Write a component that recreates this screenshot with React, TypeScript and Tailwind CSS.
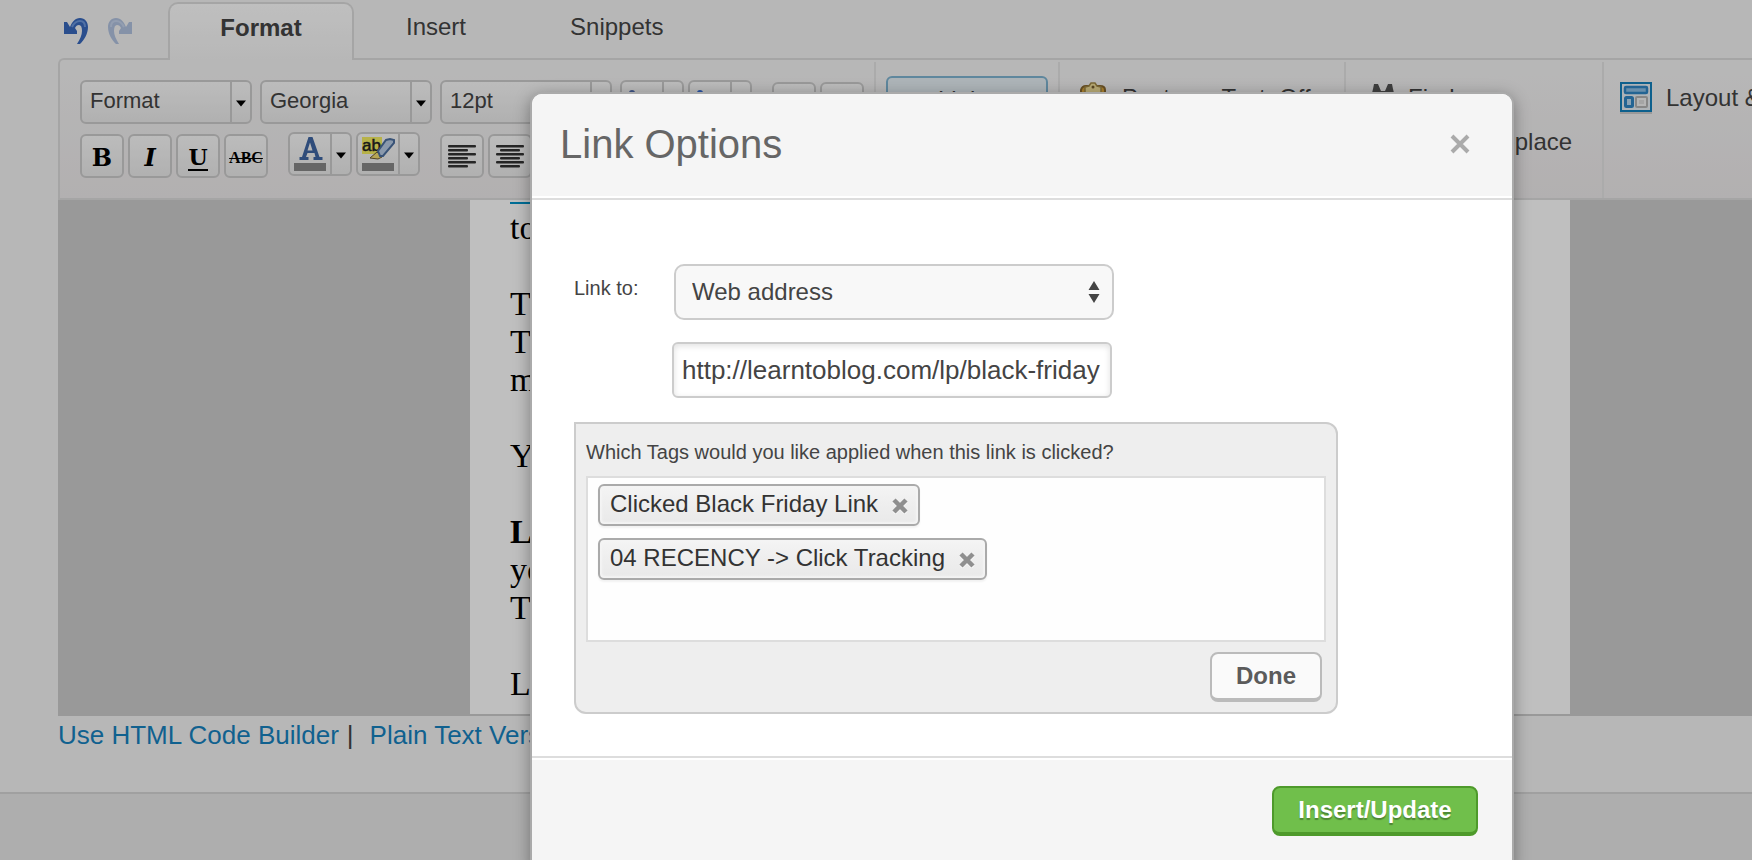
import React from "react";

const FONT = "font-['Liberation_Sans',Arial,sans-serif]";

const bodyLines = [
  { text: "to" },
  { text: "" },
  { text: "T" },
  { text: "T" },
  { text: "m" },
  { text: "" },
  { text: "Y" },
  { text: "" },
  { text: "L", bold: true },
  { text: "yo" },
  { text: "T" },
  { text: "" },
  { text: "L" },
];

const tags = ["Clicked Black Friday Link", "04 RECENCY -> Click Tracking"];

const boxStyle =
  "rounded-md border-2 border-[#ccc] bg-linear-to-b from-[#fbfbfb] to-[#ececec]";

function Caret() {
  return (
    <svg width="10" height="7" viewBox="0 0 10 7" aria-hidden="true">
      <path d="M0 0.5h10L5 6.5z" fill="#000" />
    </svg>
  );
}

function UndoIcon() {
  return (
    <svg width="26" height="28" viewBox="0 0 26 28" aria-hidden="true">
      <path
        d="M0 4h3l3 5C8 4 11 0 16 0c5 0 8 4 8 9 0 7-4 13-8 17h-3c3-5 5-9 5-13 0-4-1-6-3-6-2 0-3 1-4 3l2 3v3H0z"
        fill="#3868bd"
      />
      <path
        d="M8 9c2-4 4-6 8-6 3 0 5 2 5 6"
        fill="none"
        stroke="#6c97dc"
        strokeWidth="2"
      />
    </svg>
  );
}

function Combo({ label, value }: { label: string; value: string }) {
  return (
    <button
      aria-label={label}
      className={`flex h-11 w-43 shrink-0 items-stretch text-left text-[22px] text-[#444] ${boxStyle}`}
    >
      <span className="flex-1 pl-2 leading-[38px]">{value}</span>
      <span className="flex w-5 items-center justify-center border-l-2 border-[#ccc] pt-0.5">
        <Caret />
      </span>
    </button>
  );
}

function IconButton({
  label,
  children,
}: {
  label: string;
  children?: React.ReactNode;
}) {
  return (
    <button
      aria-label={label}
      className={`flex h-11 w-11 shrink-0 items-center justify-center ${boxStyle}`}
    >
      {children}
    </button>
  );
}

function SplitButton({
  label,
  children,
}: {
  label: string;
  children?: React.ReactNode;
}) {
  return (
    <button
      aria-label={label}
      className={`flex h-11 w-16 shrink-0 items-stretch ${boxStyle}`}
    >
      <span className="flex flex-1 items-center justify-center">
        {children}
      </span>
      <span className="flex w-5 items-center justify-center border-l-2 border-[#ccc] pt-0.5">
        <Caret />
      </span>
    </button>
  );
}

function AlignIcon({ centered }: { centered?: boolean }) {
  return (
    <svg width="28" height="24" viewBox="0 0 28 24" aria-hidden="true">
      {[1, 5, 9, 13, 17, 21].map((y, i) => {
        const w = i % 2 === 0 ? 28 : 20;
        return (
          <rect
            key={y}
            x={centered ? (28 - w) / 2 : 0}
            y={y}
            width={w}
            height="2.4"
            rx="1"
            fill="#333"
          />
        );
      })}
    </svg>
  );
}

function ListIcon({ color }: { color: string }) {
  return (
    <svg width="28" height="24" viewBox="0 0 28 24" aria-hidden="true">
      {[2, 11, 20].map((y) => (
        <g key={y}>
          <circle cx="4" cy={y + 1} r="3" fill={color} />
          <rect x="10" y={y} width="17" height="2" fill="#777" />
        </g>
      ))}
    </svg>
  );
}

function TextColorIcon() {
  return (
    <svg width="32" height="36" viewBox="0 0 32 36" aria-hidden="true">
      <path
        d="M14.500 1h4l7 20h3v3h-9v-3h2l-1-4h-7l-1.500 4h2.500v3h-9v-3h2.500zM16 6.500l-2.500 8h5z"
        fill="#3f66a3"
        fillRule="evenodd"
      />
      <rect y="27" width="32" height="8" fill="#888" />
    </svg>
  );
}

function HighlightIcon() {
  return (
    <svg width="34" height="36" viewBox="0 0 34 36" aria-hidden="true">
      <rect x="1" y="1" width="20" height="17" fill="#f4ee62" />
      <text
        x="1"
        y="15"
        fontSize="17"
        fontFamily="Liberation Sans, sans-serif"
        stroke="#222"
        strokeWidth="0.5"
        fill="#222"
      >
        ab
      </text>
      <path d="M9 22l7-6 5 5-4 2z" fill="#f2dd72" stroke="#6b5a30" />
      <path
        d="M17 15L25 4l4-1 4 1v3L22 20h-3z"
        fill="#b8cde6"
        stroke="#4c6f9f"
        strokeWidth="2"
      />
      <rect x="1" y="27" width="32" height="8" fill="#888" />
    </svg>
  );
}

function PasteIcon() {
  return (
    <svg width="32" height="32" viewBox="0 0 32 32" aria-hidden="true">
      <path d="M1 8q1-4 5-4h14q5 0 5 4v22H1z" fill="#e0a93a" stroke="#8a6a30" strokeWidth="2" />
      <path d="M5 12V5l4-1 2-3h4l2 3 4 1v7z" fill="#f4e29b" stroke="#a38a48" strokeWidth="1.500" />
      <circle cx="13" cy="5" r="1.500" fill="#7a6030" />
      <rect x="14" y="11" width="17" height="20" fill="#fff" stroke="#777" />
    </svg>
  );
}

function BinocularsIcon() {
  return (
    <svg width="26" height="30" viewBox="0 0 26 30" aria-hidden="true">
      <path
        d="M4 1h4l3 7h4l3-7h4l1 5 2 8v14H15v-9h-4v9H1V14l2-8z"
        fill="#555"
      />
    </svg>
  );
}

function LayoutIcon() {
  return (
    <svg width="32" height="32" viewBox="0 0 32 32" aria-hidden="true">
      <rect x="1" y="1" width="30" height="28" fill="#e9eff4" stroke="#1380bd" strokeWidth="2" />
      <rect x="5" y="5" width="22" height="6" rx="1" fill="#8dbfe6" stroke="#2f86c4" strokeWidth="2.500" />
      <rect x="5.500" y="15.500" width="7" height="9" rx="1" fill="#b8d9f0" stroke="#2f86c4" strokeWidth="3" />
      <rect x="16" y="15" width="11" height="10" rx="1" fill="#f2f2f2" stroke="#b5b5b5" strokeWidth="2" />
      <rect x="19" y="18" width="5" height="4" fill="#dcdcdc" />
      <path d="M0 31h32" stroke="#aaa" strokeWidth="1" />
    </svg>
  );
}

function Toolbar() {
  return (
    <div className="-mt-0.5 flex h-[142px] overflow-hidden rounded-tl-md border-2 border-r-0 border-[#ddd] bg-linear-to-b from-[#f5f5f5] to-[#eeebec] text-2xl text-[#444]">
      <div className="flex shrink-0 gap-2 pt-5 pl-5">
        <div className="flex flex-col gap-2">
          <div className="flex gap-2">
            <Combo label="Block format" value="Format" />
            <Combo label="Font family" value="Georgia" />
            <Combo label="Font size" value="12pt" />
            <div className="flex gap-1">
              <SplitButton label="Bullet list">
                <ListIcon color="#5570b0" />
              </SplitButton>
              <SplitButton label="Numbered list">
                <ListIcon color="#3b71d8" />
              </SplitButton>
            </div>
          </div>
          <div className="flex">
            <div className="flex gap-1 pt-0.5 text-black">
              <IconButton label="Bold">
                <span className="pt-1 font-['DejaVu_Serif',serif] text-2xl leading-6 font-bold">
                  B
                </span>
              </IconButton>
              <IconButton label="Italic">
                <span className="pt-1 font-['DejaVu_Serif',serif] text-2xl leading-6 font-bold italic">
                  I
                </span>
              </IconButton>
              <IconButton label="Underline">
                <span className="mt-1 border-b-2 border-black font-['DejaVu_Serif',serif] text-[22px] leading-6 font-bold">
                  U
                </span>
              </IconButton>
              <IconButton label="Strikethrough">
                <span className="pt-1 font-['Liberation_Serif',serif] text-base leading-6 font-bold line-through">
                  ABC
                </span>
              </IconButton>
            </div>
            <div className="flex gap-1 pl-5">
              <SplitButton label="Text color">
                <TextColorIcon />
              </SplitButton>
              <SplitButton label="Highlight color">
                <HighlightIcon />
              </SplitButton>
            </div>
            <div className="flex gap-1 pt-0.5 pl-5">
              <IconButton label="Align left">
                <AlignIcon />
              </IconButton>
              <IconButton label="Align center">
                <AlignIcon centered />
              </IconButton>
            </div>
          </div>
        </div>
        <div className="flex gap-1 pt-0.5 pl-3">
          <IconButton label="Outdent">
            <svg width="24" height="26" viewBox="0 0 24 26" aria-hidden="true">
              <path d="M11 1v24" stroke="#aaa" strokeWidth="3" />
            </svg>
          </IconButton>
          <IconButton label="Indent">
            <svg width="24" height="26" viewBox="0 0 24 26" aria-hidden="true">
              <path d="M11 1v24" stroke="#333" strokeWidth="3" />
            </svg>
          </IconButton>
        </div>
      </div>

      <div className="mt-0.5 ml-2.5 w-[186px] shrink-0 border-x-2 border-[#e4e4e4] pt-3.5 pl-2.5">
        <button className="flex h-11 w-[162px] items-center gap-3 rounded-md border-2 border-[#7fb4d2] bg-[#e7f1f6] pt-1 pl-2.5">
          <svg width="28" height="10" viewBox="0 0 28 10" aria-hidden="true">
            <rect x="1" y="1" width="12" height="8" rx="3" fill="none" stroke="#c5ccd4" strokeWidth="2" />
            <rect x="15" y="1" width="12" height="8" rx="3" fill="none" stroke="#c5ccd4" strokeWidth="2" />
          </svg>
          <span>Link</span>
        </button>
      </div>

      <div className="mt-0.5 w-[286px] shrink-0 border-r-2 border-[#e4e4e4] pt-5 pl-5">
        <button className="flex items-center gap-2.5">
          <PasteIcon />
          <span>Paste as Text: Off</span>
        </button>
      </div>

      <div className="mt-0.5 w-[258px] shrink-0 border-r-2 border-[#e4e4e4] pt-5 pl-6">
        <button className="flex h-8 items-center gap-3">
          <BinocularsIcon />
          <span>Find</span>
        </button>
        <button className="mt-3 flex h-8 items-center pl-[38px] whitespace-nowrap">
          Find &amp; Replace
        </button>
      </div>

      <div className="mt-0.5 shrink-0 pt-5 pl-4">
        <button className="flex h-8 items-center gap-3.5 whitespace-nowrap">
          <LayoutIcon />
          <span>Layout &amp;</span>
        </button>
      </div>
    </div>
  );
}

function EditorPage() {
  return (
    <div className="min-h-screen bg-[#e8e8e8]">
      <div className="border-b-2 border-[#d6d6d6] bg-[#f5f5f5] pb-[42px] pl-[58px]">
        <div className="relative z-10 flex h-15 pt-0.5 text-2xl text-[#444]">
          <div className="flex items-start gap-4 pt-4 pl-1.5">
            <button aria-label="Undo">
              <UndoIcon />
            </button>
            <button aria-label="Redo" className="-scale-x-100 opacity-35">
              <UndoIcon />
            </button>
          </div>
          <div className="flex pl-9" role="tablist">
            <button
              role="tab"
              aria-selected="true"
              className="h-[58px] w-[186px] rounded-t-[10px] border-2 border-b-0 border-[#ddd] bg-linear-to-b from-white to-[#f5f5f5] pb-2 font-bold"
            >
              Format
            </button>
            <button role="tab" aria-selected="false" className="pb-2 pl-13">
              Insert
            </button>
            <button role="tab" aria-selected="false" className="pb-2 pl-26">
              Snippets
            </button>
          </div>
        </div>
        <Toolbar />
        <div className="flex h-[516px] justify-center border-b-2 border-[#ccc] bg-[#ccc] pr-[182px] pl-[412px]">
          <div className="flex-1 overflow-hidden bg-white pl-10 font-['Liberation_Serif',serif] text-[34px] leading-[38px] text-black">
            <div className="h-[9px]">
              <div className="h-1 w-10 border-b-2 border-[#0093c8]" />
            </div>
            {bodyLines.map((line, i) => (
              <p key={i} className={`h-[38px] ${line.bold ? "font-bold" : ""}`}>
                {line.text}
              </p>
            ))}
          </div>
        </div>
        <div className="flex gap-2 pt-1 text-[26px] leading-[30px] text-[#444]">
          <a href="#html" className="text-[#1682bf]">
            Use HTML Code Builder
          </a>
          <span>|</span>
          <a href="#plain" className="pl-2 text-[#1682bf]">
            Plain Text Version
          </a>
        </div>
      </div>
    </div>
  );
}

function LinkDialog() {
  return (
    <div
      role="dialog"
      aria-labelledby="link-dialog-title"
      className="mt-[92px] mr-[238px] ml-[530px] flex h-[782px] flex-1 flex-col overflow-hidden rounded-xl border-2 border-[#aaa] bg-white text-[#444] shadow-[0_4px_16px_rgba(0,0,0,0.35)]"
    >
      <header className="flex h-[106px] items-center justify-between border-b-2 border-[#ddd] bg-[#f5f5f5] pr-[42px] pl-7 shadow-[inset_0_-2px_0_#fff]">
        <h2
          id="link-dialog-title"
          className="pb-1 text-[40px] leading-12 text-[#666]"
        >
          Link Options
        </h2>
        <button aria-label="Close" className="pb-1 text-[#aaa]">
          <svg width="20" height="20" viewBox="0 0 20 20" aria-hidden="true">
            <path
              d="M2 2l16 16M18 2L2 18"
              stroke="currentColor"
              strokeWidth="4"
            />
          </svg>
        </button>
      </header>

      <div className="h-[556px] pt-16 pr-[174px] pl-[42px]">
        <div className="flex items-start">
          <label htmlFor="link-to" className="w-25 pt-3 text-xl leading-6">
            Link to:
          </label>
          <div className="relative w-[440px]">
            <select
              id="link-to"
              className="h-14 w-full appearance-none rounded-[10px] border-2 border-[#ccc] bg-[#f8f8f8] pl-4 text-2xl"
            >
              <option>Web address</option>
            </select>
            <svg
              width="12"
              height="22"
              viewBox="0 0 12 22"
              className="pointer-events-none absolute top-[17px] right-3.5"
              aria-hidden="true"
            >
              <path d="M0.500 9L6 0l5.500 9zM0.500 13h11L6 22z" fill="#444" />
            </svg>
          </div>
        </div>
        <input
          type="text"
          aria-label="Link address"
          defaultValue="http://learntoblog.com/lp/black-friday"
          className="mt-[22px] ml-[98px] block h-14 w-[440px] rounded-md border-2 border-[#ccc] bg-white px-2 text-[26px] shadow-[inset_0_2px_6px_rgba(0,0,0,0.12)]"
        />

        <section className="mt-6 rounded-[12px] rounded-tl-none border-2 border-[#ccc] bg-[#eee] px-2.5 pb-2.5">
          <p className="h-[52px] pt-4 text-xl leading-6">
            Which Tags would you like applied when this link is clicked?
          </p>
          <ul className="flex h-[166px] flex-col items-start gap-3 border-2 border-[#ddd] bg-[#fefefe] px-2.5 pt-1.5">
            {tags.map((tag) => (
              <li
                key={tag}
                className="flex h-[42px] items-center gap-3.5 rounded-md border-2 border-[#aaa] bg-linear-to-b from-[#f4f4f4] via-[#eeeeee] to-[#e9e9e9] px-2.5 text-2xl text-[#333] shadow-[inset_0_0_2px_2px_#f4f4f4,0_2px_2px_rgba(0,0,0,0.05)]"
              >
                <span className="pb-0.5">{tag}</span>
                <button aria-label={`Remove ${tag}`} className="pt-0.5">
                  <svg width="16" height="16" viewBox="0 0 16 16" aria-hidden="true">
                    <path
                      d="M2 3l12 12M14 3L2 15"
                      stroke="#fff"
                      strokeWidth="4"
                    />
                    <path
                      d="M2 2l12 12M14 2L2 14"
                      stroke="#8f8f8f"
                      strokeWidth="4.500"
                    />
                  </svg>
                </button>
              </li>
            ))}
          </ul>
          <div className="flex justify-end pt-2.5 pr-1">
            <button className="h-[50px] w-28 rounded-lg border-2 border-b-4 border-[#bbb] bg-[#fafafa] text-2xl font-bold text-[#5b5b5b]">
              Done
            </button>
          </div>
        </section>
      </div>

      <footer className="flex flex-1 items-start justify-end border-t-2 border-[#ddd] bg-[#f5f5f5] pt-7 pr-[34px] shadow-[inset_0_2px_0_#fff]">
        <button className="h-[50px] w-[206px] rounded-lg border-2 border-b-4 border-[#4e9a2b] bg-[#70bf4b] text-2xl font-bold text-white [text-shadow:0_2px_1px_rgba(0,0,0,0.3)]">
          Insert/Update
        </button>
      </footer>
    </div>
  );
}

export default function App() {
  return (
    <div className={`relative h-screen overflow-hidden ${FONT}`}>
      <EditorPage />
      <div className="absolute inset-0 z-20 flex items-start overflow-hidden bg-black/25">
        <LinkDialog />
      </div>
    </div>
  );
}
